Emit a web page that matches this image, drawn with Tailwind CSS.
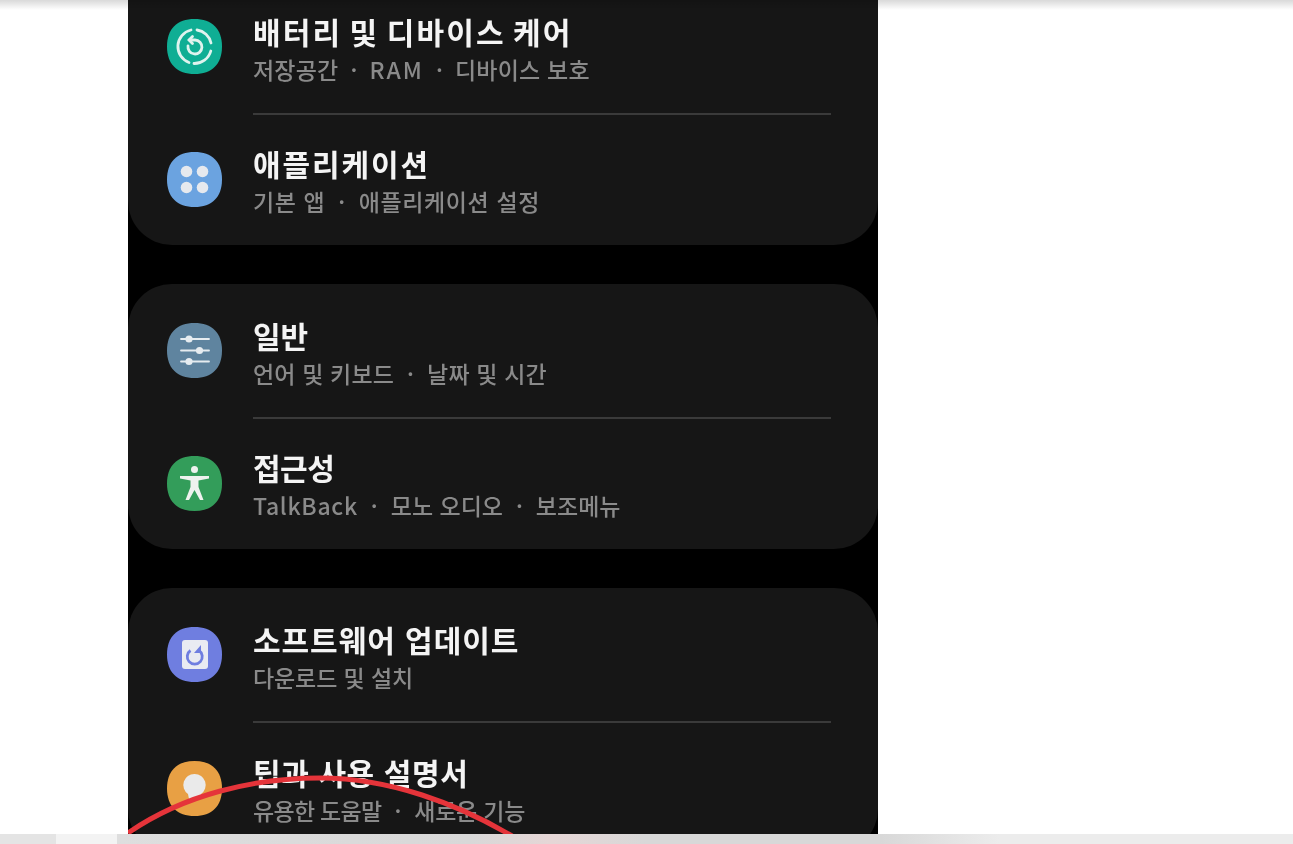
<!DOCTYPE html>
<html lang="ko">
<head>
    <meta charset="UTF-8">
    <title>설정</title>
    <script src="https://cdn.jsdelivr.net/npm/@tailwindcss/browser@4"></script>
</head>
<body class="bg-white w-[1293px] h-[844px] overflow-hidden relative font-['Noto_Sans_CJK_KR','Noto_Sans',sans-serif]">
    <!-- Top edge shadow -->
    <div class="absolute top-0 left-0 w-full h-[10px] bg-gradient-to-b from-black/15 to-transparent z-20"></div>

    <!-- Phone screenshot -->
    <div class="relative w-[750px] h-[834px] ml-[128px] bg-black overflow-hidden">
        <div class="flex flex-col gap-[39px] -mt-[20px] blur-[0.6px]">

            <!-- Card 1 -->
            <section class="h-[265px] bg-[#161616] rounded-b-[44px] flex flex-col">
                <div class="h-[133px] flex items-center pl-[39px]">
                    <svg class="w-[55px] h-[55px] shrink-0" viewBox="0 0 55 55">
                        <path fill="#0fae94" d="M27.5 0C45 0 55 10 55 27.5S45 55 27.5 55 0 45 0 27.5 10 0 27.5 0Z"/>
                        <g fill="none" stroke="#dff3ee" stroke-width="2.8" stroke-linecap="round">
                            <path d="M24 11A17 17 0 0 0 22 43.500"/>
                            <path d="M30 11A17 17 0 0 1 44 24"/>
                            <path d="M43.800 32A17 17 0 0 1 27 44.500"/>
                            <path d="M21 27A7 7 0 1 0 28 21H22.500"/>
                            <path d="M25.500 17.500L22 21L25.500 24.500"/>
                        </g>
                    </svg>
                    <div class="ml-[31px] pt-[6px]">
                        <h2 class="text-[30px] leading-[38px] font-bold text-[#f4f4f4] tracking-[2.1px] [word-spacing:-3px] whitespace-nowrap">배터리 및 디바이스 케어</h2>
                        <p class="text-[23px] leading-[38px] font-medium text-[#8a8a8a] tracking-[0.2px] whitespace-nowrap">저장공간<span class="mx-[12px]">·</span><span class="tracking-[2px]">RAM</span><span class="mx-[12px]">·</span>디바이스 보호</p>
                    </div>
                </div>
                <div class="h-[2px] ml-[125px] mr-[47px] bg-[#3a3a3a]"></div>
                <div class="flex-1 flex items-center pl-[39px] pb-[2px]">
                    <svg class="w-[55px] h-[55px] shrink-0" viewBox="0 0 55 55">
                        <path fill="#6ba3e0" d="M27.5 0C45 0 55 10 55 27.5S45 55 27.5 55 0 45 0 27.5 10 0 27.5 0Z"/>
                        <g fill="#e6e9ee">
                            <circle cx="19.5" cy="19.5" r="5.8"/><circle cx="35.5" cy="19.5" r="5.8"/>
                            <circle cx="19.5" cy="35.5" r="5.8"/><circle cx="35.5" cy="35.5" r="5.8"/>
                        </g>
                    </svg>
                    <div class="ml-[31px] pt-[6px]">
                        <h2 class="text-[30px] leading-[38px] font-bold text-[#f4f4f4] tracking-[1.9px] whitespace-nowrap">애플리케이션</h2>
                        <p class="text-[23px] leading-[38px] font-medium text-[#8a8a8a] tracking-[0.6px] whitespace-nowrap">기본 앱<span class="mx-[13px]">·</span>애플리케이션 설정</p>
                    </div>
                </div>
            </section>

            <!-- Card 2 -->
            <section class="h-[265px] bg-[#161616] rounded-[44px] flex flex-col">
                <div class="h-[133px] flex items-center pl-[39px]">
                    <svg class="w-[55px] h-[55px] shrink-0" viewBox="0 0 55 55">
                        <path fill="#5f849f" d="M27.5 0C45 0 55 10 55 27.5S45 55 27.5 55 0 45 0 27.5 10 0 27.5 0Z"/>
                        <g stroke="#e6ecf0" stroke-width="1.8" stroke-linecap="round">
                            <path d="M14 16H42"/><path d="M14 27.5H42"/><path d="M14 38.5H42"/>
                        </g>
                        <g fill="#e6ecf0"><circle cx="22" cy="16" r="3.6"/><circle cx="32.500" cy="27.5" r="3.6"/><circle cx="22" cy="38.500" r="3.6"/></g>
                    </svg>
                    <div class="ml-[31px] pt-[6px]">
                        <h2 class="text-[30px] leading-[38px] font-bold text-[#f4f4f4] tracking-[0px] whitespace-nowrap">일반</h2>
                        <p class="text-[23px] leading-[38px] font-medium text-[#8a8a8a] tracking-[0.15px] whitespace-nowrap">언어 및 키보드<span class="mx-[13px]">·</span>날짜 및 시간</p>
                    </div>
                </div>
                <div class="h-[2px] ml-[125px] mr-[47px] bg-[#3a3a3a]"></div>
                <div class="flex-1 flex items-center pl-[39px] pb-[2px]">
                    <svg class="w-[55px] h-[55px] shrink-0" viewBox="0 0 55 55">
                        <path fill="#339d5a" d="M27.5 0C45 0 55 10 55 27.5S45 55 27.5 55 0 45 0 27.5 10 0 27.5 0Z"/>
                        <circle cx="27.500" cy="13.500" r="3.500" fill="#eef2ee"/>
                        <path fill="#eef2ee" d="M13 20H42V22.500L31.500 24.500V31L36.500 44H33L27.500 34L22 44H18.500L23.500 31V24.500L13 22.500Z"/>
                    </svg>
                    <div class="ml-[31px] pt-[6px]">
                        <h2 class="text-[30px] leading-[38px] font-bold text-[#f4f4f4] tracking-[-0.5px] whitespace-nowrap">접근성</h2>
                        <p class="text-[23px] leading-[38px] font-medium text-[#8a8a8a] tracking-[0px] whitespace-nowrap"><span class="tracking-[0.7px]">TalkBack</span><span class="mx-[13px]">·</span>모노 오디오<span class="mx-[13px]">·</span>보조메뉴</p>
                    </div>
                </div>
            </section>

            <!-- Card 3, runs off the bottom -->
            <section class="h-[265px] bg-[#161616] rounded-[44px] flex flex-col">
                <div class="h-[133px] flex items-center pl-[39px]">
                    <svg class="w-[55px] h-[55px] shrink-0" viewBox="0 0 55 55">
                        <path fill="#6f7ee0" d="M27.5 0C45 0 55 10 55 27.5S45 55 27.5 55 0 45 0 27.5 10 0 27.5 0Z"/>
                        <rect x="15" y="13" width="26" height="29" rx="3" fill="#e9ebf2"/>
                        <path fill="none" stroke="#6f7ee0" stroke-width="2.800" d="M23.500 23.500A7.500 7.500 0 1 0 32 23.500"/>
                        <path fill="#6f7ee0" d="M34 18V26H27Z"/>
                    </svg>
                    <div class="ml-[31px] pt-[6px]">
                        <h2 class="text-[30px] leading-[38px] font-bold text-[#f4f4f4] tracking-[0.95px] whitespace-nowrap">소프트웨어 업데이트</h2>
                        <p class="text-[23px] leading-[38px] font-medium text-[#8a8a8a] tracking-[-0.1px] whitespace-nowrap">다운로드 및 설치</p>
                    </div>
                </div>
                <div class="h-[2px] ml-[125px] mr-[47px] bg-[#3a3a3a]"></div>
                <div class="flex-1 flex items-center pl-[39px]">
                    <svg class="w-[55px] h-[55px] shrink-0" viewBox="0 0 55 55">
                        <path fill="#e8a044" d="M27.5 0C45 0 55 10 55 27.5S45 55 27.5 55 0 45 0 27.5 10 0 27.5 0Z"/>
                        <path fill="#eaeaea" d="M27.500 13A11 11 0 0 1 34 33L33 38H22L21 33A11 11 0 0 1 27.500 13Z"/>
                    </svg>
                    <div class="ml-[31px] pt-[6px]">
                        <h2 class="text-[30px] leading-[38px] font-bold text-[#f4f4f4] tracking-[0.6px] whitespace-nowrap">팁과 사용 설명서</h2>
                        <p class="text-[23px] leading-[38px] font-medium text-[#8a8a8a] tracking-[-0.2px] whitespace-nowrap"><span class="tracking-[-0.7px]">유용한 도움말</span><span class="mx-[13px]">·</span>새로운 기능</p>
                    </div>
                </div>
            </section>
        </div>

        <!-- Red hand-drawn circle, lies over the last row -->
        <svg class="absolute left-0 top-[760px] w-[750px] h-[74px]" viewBox="0 0 750 74" fill="none">
            <path d="M0 73C55 35 125 18 192 18C262 18 330 44 384 76" stroke="#e5343a" stroke-width="5"/>
        </svg>
    </div>

    <!-- Bottom strip -->
    <div class="h-[10px] flex">
        <div class="w-[56px] bg-[#e4e4e4]"></div>
        <div class="w-[61px] bg-[#f3f3f3]"></div>
        <div class="flex-1 bg-[linear-gradient(to_right,#dedede,#d8d8d8_30%,#e6d6d6_37%,#d8d8d8_45%,#d8d8d8_65%,#ececec_75%,#ececec)]"></div>
    </div>
</body>
</html>
